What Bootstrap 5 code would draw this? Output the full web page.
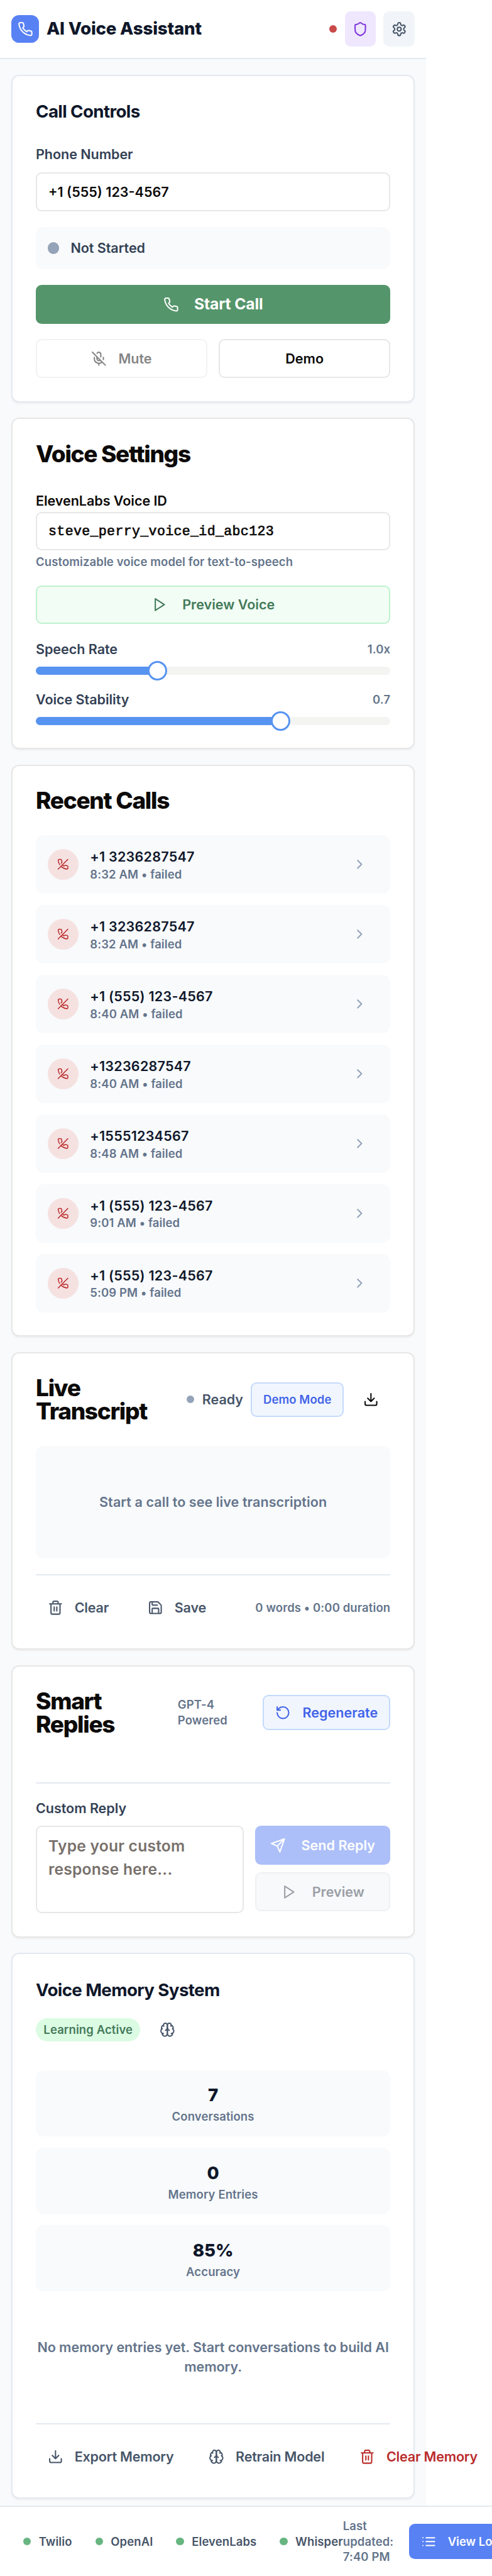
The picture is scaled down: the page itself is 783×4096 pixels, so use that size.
<!DOCTYPE html>
<html lang="en">
<head>
<meta charset="utf-8">
<meta name="viewport" content="width=device-width, initial-scale=1">
<title>AI Voice Assistant</title>
<link href="https://cdn.jsdelivr.net/npm/bootstrap@5.3.0/dist/css/bootstrap.min.css" rel="stylesheet">
<style>
  html { font-size: 24.6614px; overflow: hidden; }
  body { font-family: Inter, "Liberation Sans", sans-serif; font-weight: 600; font-size: .875rem; line-height: 1.25rem; letter-spacing: -.003em; color: #0c0a09; background: #fff; overflow: hidden; height: 4096px; }
  .shell { width: 27.5rem; }
  .icon { width: 1rem; height: 1rem; fill: none; stroke: currentColor; stroke-width: 2; stroke-linecap: round; stroke-linejoin: round; flex: none; }
  .t-slate { color: #64748b; } .t-ink { color: #0f172a; } .t-mid { color: #334155; } .t-steel { color: #475569; }
  .xs, .btn.xs { font-size: .75rem; line-height: 1rem; letter-spacing: .006em; }
  .soft { background: #f8fafc; border-radius: .5rem; }
  .dot { width: .5rem; height: .5rem; border-radius: 50%; background: #94a3b8; flex: none; }
  .dot-ok { background: #67b580; } .dot-bad { background: #ca4a49; }

  .topbar { height: 3.8125rem; padding: 0 .75rem; border-bottom: 2px solid #e4e9f1; background: #fff; }
  .logo { width: 1.75rem; height: 1.75rem; border-radius: .5rem; background: #5881f4; color: #fff; }
  .tool { width: 2rem; height: 2.25rem; border-radius: .375rem; padding: 0; border: 0; }
  .tool-shield { background: #efe7fe; color: #7c35de; } .tool-gear { background: #f1f5f9; color: #475569; }
  .brand { font-size: 1.125rem; font-weight: 800; letter-spacing: -.008em; line-height: 1.75rem; }

  main { background: #f8fafc; padding: 1rem .75rem .4375rem; }
  .panel { background: #fff; border: 2px solid #e8e7e6; border-radius: .5rem; padding: calc(1.5625rem - 2px); box-shadow: 0 .0625rem .125rem rgba(0,0,0,.05); }
  .panel-blue { border-color: #e4e9f1; }
  .h-sm { font-size: 1.125rem; line-height: 1.6875rem; font-weight: 700; letter-spacing: -.023em; color: #0f172a; margin: 0; }
  .h-lg { font-size: 1.5rem; line-height: 1.5rem; font-weight: 800; letter-spacing: -.035em; margin: 0; }
  .field { height: 2.5rem; border: 2px solid #e8e7e6; border-radius: .375rem; padding: 0 calc(.8125rem - 2px); font-size: .875rem; font-weight: 600; color: #0c0a09; width: 100%; background: #fff; outline: 0; display: block; }
  .mono { font-family: "Liberation Mono", monospace; font-weight: 400; letter-spacing: .0165em; -webkit-text-stroke: .7px #0c0a09; }
  textarea.field { height: 5.625rem; font-size: 1rem; line-height: 1.5rem; padding-top: calc(.5625rem - 2px); resize: none; letter-spacing: .008em; }
  textarea.field::placeholder { color: #78716c; opacity: 1; }

  .btn { display: inline-flex; align-items: center; justify-content: center; gap: 1rem; height: 2.5rem; padding: 0; font-size: .875rem; line-height: 1.25rem; font-weight: 600; border: 2px solid transparent; border-radius: .375rem; white-space: nowrap; color: #0c0a09; }
  .btn-go { background: #55956b; color: #fff; font-size: 1rem; font-weight: 700; letter-spacing: -.006em; }
  .btn-line { border-color: #e8e7e6; background: #fff; gap: .75rem; }
  .half { opacity: .5; }
  .btn-mint { background: #f2fdf5; border-color: #bff2cf; color: #447a5a; }
  .btn-sky { height: 2.25rem; background: #f1f6fe; border-color: #c4dafc; color: #4263e8; }
  .btn-ghost { height: 2.25rem; gap: .75rem; padding: 0 calc(.75rem - 2px); color: #475569; letter-spacing: -.01em; }
  .btn-send { background: #acbff9; color: #fff; width: 8.725rem; }
  .btn-wait { background: #f8f9fb; border-color: #eff0f1; color: #9b9fa6; width: 8.725rem; }
  .btn-blue { background: #5881f4; color: #fff; height: 2.25rem; gap: .75rem; padding: 0 calc(.75rem - 2px); font-size: .75rem; flex: none; }

  .slide { height: .5rem; border-radius: .5rem; background: #f4f4f3; }
  .slide-fill { height: 100%; border-radius: .5rem 0 0 .5rem; background: #5793f1; position: relative; }
  .slide-fill::after { content: ""; position: absolute; right: -.625rem; top: -.375rem; width: 1.25rem; height: 1.25rem; border-radius: 50%; background: #fff; border: .125rem solid #5793f1; }

  .call { padding: .75rem; height: 3.75rem; }
  .call .t-ink { letter-spacing: .01em; }
  .call-ic { width: 2rem; height: 2rem; border-radius: 50%; background: #f6e1e1; color: #ba2c2b; }
  .call-ic .icon { width: .75rem; height: .75rem; }
  .go { width: 2.5rem; color: #94a3b8; }
  .empty { height: 7.25rem; letter-spacing: .003em; }
  .rule { border-top: 2px solid #e4e9f1; }
  .pill { background: #dcfbe3; color: #447a5a; border-radius: 1rem; padding: .25rem .5rem; }
  .stat { height: 4.25rem; padding: .75rem; text-align: center; }
  .stat b { display: block; font-size: 1.125rem; line-height: 1.75rem; font-weight: 800; color: #0f172a; }
  footer { width: 34rem; height: 4.5625rem; border-top: 2px solid #e4e9f1; background: #fff; padding-left: 1.5rem; }
</style>
</head>
<body>
<svg class="d-none">
  <symbol id="phone" viewBox="0 0 24 24"><path d="M22 16.92v3a2 2 0 0 1-2.18 2 19.79 19.79 0 0 1-8.63-3.07 19.5 19.5 0 0 1-6-6 19.79 19.79 0 0 1-3.07-8.67A2 2 0 0 1 4.11 2h3a2 2 0 0 1 2 1.72 12.84 12.84 0 0 0 .7 2.81 2 2 0 0 1-.45 2.11L8.09 9.91a16 16 0 0 0 6 6l1.27-1.27a2 2 0 0 1 2.11-.45 12.84 12.84 0 0 0 2.81.7A2 2 0 0 1 22 16.92z"/></symbol>
  <symbol id="phone-off" viewBox="0 0 24 24"><path d="M10.68 13.31a16 16 0 0 0 3.41 2.6l1.27-1.27a2 2 0 0 1 2.11-.45 12.84 12.84 0 0 0 2.81.7 2 2 0 0 1 1.72 2v3a2 2 0 0 1-2.18 2 19.79 19.79 0 0 1-8.63-3.07 19.42 19.42 0 0 1-3.33-2.67m-2.67-3.34a19.79 19.79 0 0 1-3.07-8.63A2 2 0 0 1 4.11 2h3a2 2 0 0 1 2 1.72 12.84 12.84 0 0 0 .7 2.81 2 2 0 0 1-.45 2.11L8.09 9.91"/><path d="M22 2 2 22"/></symbol>
  <symbol id="shield" viewBox="0 0 24 24"><path d="M20 13c0 5-3.5 7.5-7.66 8.95a1 1 0 0 1-.67-.01C7.5 20.5 4 18 4 13V6a1 1 0 0 1 1-1c2 0 4.5-1.2 6.24-2.72a1.17 1.17 0 0 1 1.52 0C14.51 3.81 17 5 19 5a1 1 0 0 1 1 1z"/></symbol>
  <symbol id="gear" viewBox="0 0 24 24"><path d="M12.22 2h-.44a2 2 0 0 0-2 2v.18a2 2 0 0 1-1 1.73l-.43.25a2 2 0 0 1-2 0l-.15-.08a2 2 0 0 0-2.73.73l-.22.38a2 2 0 0 0 .73 2.73l.15.1a2 2 0 0 1 1 1.72v.51a2 2 0 0 1-1 1.74l-.15.09a2 2 0 0 0-.73 2.73l.22.38a2 2 0 0 0 2.73.73l.15-.08a2 2 0 0 1 2 0l.43.25a2 2 0 0 1 1 1.73V20a2 2 0 0 0 2 2h.44a2 2 0 0 0 2-2v-.18a2 2 0 0 1 1-1.73l.43-.25a2 2 0 0 1 2 0l.15.08a2 2 0 0 0 2.73-.73l.22-.39a2 2 0 0 0-.73-2.73l-.15-.08a2 2 0 0 1-1-1.74v-.5a2 2 0 0 1 1-1.74l.15-.09a2 2 0 0 0 .73-2.73l-.22-.38a2 2 0 0 0-2.73-.73l-.15.08a2 2 0 0 1-2 0l-.43-.25a2 2 0 0 1-1-1.73V4a2 2 0 0 0-2-2z"/><circle cx="12" cy="12" r="3"/></symbol>
  <symbol id="mic-off" viewBox="0 0 24 24"><path d="m2 2 20 20M18.89 13.23A7.12 7.12 0 0 0 19 12v-2M5 10v2a7 7 0 0 0 12 5M15 9.34V5a3 3 0 0 0-5.68-1.33M9 9v3a3 3 0 0 0 5.12 2.12M12 19v3"/></symbol>
  <symbol id="play" viewBox="0 0 24 24"><path d="m6 3 14 9-14 9z"/></symbol>
  <symbol id="chevron" viewBox="0 0 24 24"><path d="m9 18 6-6-6-6"/></symbol>
  <symbol id="download" viewBox="0 0 24 24"><path d="M21 15v4a2 2 0 0 1-2 2H5a2 2 0 0 1-2-2v-4M7 10l5 5 5-5M12 15V3"/></symbol>
  <symbol id="trash" viewBox="0 0 24 24"><path d="M3 6h18M19 6v14c0 1-1 2-2 2H7c-1 0-2-1-2-2V6M8 6V4c0-1 1-2 2-2h4c1 0 2 1 2 2v2M10 11v6M14 11v6"/></symbol>
  <symbol id="save" viewBox="0 0 24 24"><path d="M15.2 3a2 2 0 0 1 1.4.6l3.8 3.8a2 2 0 0 1 .6 1.4V19a2 2 0 0 1-2 2H5a2 2 0 0 1-2-2V5a2 2 0 0 1 2-2zM17 21v-7a1 1 0 0 0-1-1H8a1 1 0 0 0-1 1v7M7 3v4a1 1 0 0 0 1 1h7"/></symbol>
  <symbol id="rotate" viewBox="0 0 24 24"><path d="M3 12a9 9 0 1 0 9-9 9.75 9.75 0 0 0-6.74 2.74L3 8M3 3v5h5"/></symbol>
  <symbol id="send" viewBox="0 0 24 24"><path d="m22 2-7 20-4-9-9-4ZM22 2 11 13"/></symbol>
  <symbol id="brain" viewBox="0 0 24 24"><path d="M12 5a3 3 0 1 0-5.997.125 4 4 0 0 0-2.526 5.77 4 4 0 0 0 .556 6.588A4 4 0 1 0 12 18Z"/><path d="M12 5a3 3 0 1 1 5.997.125 4 4 0 0 1 2.526 5.77 4 4 0 0 1-.556 6.588A4 4 0 1 1 12 18Z"/><path d="M15 13a4.5 4.5 0 0 1-3-4 4.5 4.5 0 0 1-3 4M17.599 6.5a3 3 0 0 0 .399-1.375M6.003 5.125A3 3 0 0 0 6.401 6.5M3.477 10.896a4 4 0 0 1 .585-.396M19.938 10.5a4 4 0 0 1 .585.396M6 18a4 4 0 0 1-1.967-.516M19.967 17.484A4 4 0 0 1 18 18"/></symbol>
  <symbol id="list" viewBox="0 0 24 24"><path d="M8 6h13M8 12h13M8 18h13M3 6h.01M3 12h.01M3 18h.01"/></symbol>
</svg>

<div class="shell">
  <header class="topbar d-flex align-items-center gap-2">
    <span class="logo d-flex align-items-center justify-content-center"><svg class="icon"><use href="#phone"/></svg></span>
    <h1 class="brand t-ink mb-0 me-auto">AI Voice Assistant</h1>
    <span class="dot dot-bad"></span>
    <button class="tool tool-shield d-flex align-items-center justify-content-center"><svg class="icon"><use href="#shield"/></svg></button>
    <button class="tool tool-gear d-flex align-items-center justify-content-center"><svg class="icon"><use href="#gear"/></svg></button>
  </header>

  <main class="d-flex flex-column gap-3">
    <section class="panel panel-blue">
      <h2 class="h-sm" style="margin-bottom:1.25rem">Call Controls</h2>
      <label class="d-block t-mid" style="margin-bottom:.5625rem">Phone Number</label>
      <input class="field mb-3" value="+1 (555) 123-4567">
      <div class="soft d-flex align-items-center mb-3" style="height:2.75rem;padding:0 .75rem;gap:.75rem">
        <span class="dot" style="width:.75rem;height:.75rem"></span><span class="t-mid">Not Started</span>
      </div>
      <button class="btn btn-go w-100 mb-3"><svg class="icon"><use href="#phone"/></svg>Start Call</button>
      <div class="d-flex" style="gap:.75rem">
        <button class="btn btn-line half flex-fill w-50"><svg class="icon"><use href="#mic-off"/></svg>Mute</button>
        <button class="btn btn-line flex-fill w-50">Demo</button>
      </div>
    </section>

    <section class="panel">
      <h2 class="h-lg" style="margin-bottom:1.6875rem">Voice Settings</h2>
      <label class="d-block" style="margin-bottom:.0625rem">ElevenLabs Voice ID</label>
      <input class="field mono" value="steve_perry_voice_id_abc123">
      <div class="xs t-slate" style="margin:.25rem 0 1rem">Customizable voice model for text-to-speech</div>
      <button class="btn btn-mint w-100" style="margin-bottom:1rem"><svg class="icon"><use href="#play"/></svg>Preview Voice</button>
      <div class="d-flex justify-content-between align-items-center mb-2"><span class="t-mid">Speech Rate</span><span class="xs t-slate">1.0x</span></div>
      <div class="slide mb-3"><div class="slide-fill" style="width:34.25%"></div></div>
      <div class="d-flex justify-content-between align-items-center mb-2"><span class="t-mid">Voice Stability</span><span class="xs t-slate">0.7</span></div>
      <div class="slide"><div class="slide-fill" style="width:69%"></div></div>
    </section>

    <section class="panel">
      <h2 class="h-lg mb-4">Recent Calls</h2>
      <div class="d-flex flex-column" style="gap:.75rem">
        <div class="soft call d-flex align-items-center"><span class="call-ic d-flex align-items-center justify-content-center me-2"><svg class="icon"><use href="#phone-off"/></svg></span><div class="ms-1 me-auto"><div class="t-ink">+1 3236287547</div><div class="xs t-slate">8:32 AM • failed</div></div><span class="go d-flex justify-content-center"><svg class="icon"><use href="#chevron"/></svg></span></div>
        <div class="soft call d-flex align-items-center"><span class="call-ic d-flex align-items-center justify-content-center me-2"><svg class="icon"><use href="#phone-off"/></svg></span><div class="ms-1 me-auto"><div class="t-ink">+1 3236287547</div><div class="xs t-slate">8:32 AM • failed</div></div><span class="go d-flex justify-content-center"><svg class="icon"><use href="#chevron"/></svg></span></div>
        <div class="soft call d-flex align-items-center"><span class="call-ic d-flex align-items-center justify-content-center me-2"><svg class="icon"><use href="#phone-off"/></svg></span><div class="ms-1 me-auto"><div class="t-ink">+1 (555) 123-4567</div><div class="xs t-slate">8:40 AM • failed</div></div><span class="go d-flex justify-content-center"><svg class="icon"><use href="#chevron"/></svg></span></div>
        <div class="soft call d-flex align-items-center"><span class="call-ic d-flex align-items-center justify-content-center me-2"><svg class="icon"><use href="#phone-off"/></svg></span><div class="ms-1 me-auto"><div class="t-ink">+13236287547</div><div class="xs t-slate">8:40 AM • failed</div></div><span class="go d-flex justify-content-center"><svg class="icon"><use href="#chevron"/></svg></span></div>
        <div class="soft call d-flex align-items-center"><span class="call-ic d-flex align-items-center justify-content-center me-2"><svg class="icon"><use href="#phone-off"/></svg></span><div class="ms-1 me-auto"><div class="t-ink">+15551234567</div><div class="xs t-slate">8:48 AM • failed</div></div><span class="go d-flex justify-content-center"><svg class="icon"><use href="#chevron"/></svg></span></div>
        <div class="soft call d-flex align-items-center"><span class="call-ic d-flex align-items-center justify-content-center me-2"><svg class="icon"><use href="#phone-off"/></svg></span><div class="ms-1 me-auto"><div class="t-ink">+1 (555) 123-4567</div><div class="xs t-slate">9:01 AM • failed</div></div><span class="go d-flex justify-content-center"><svg class="icon"><use href="#chevron"/></svg></span></div>
        <div class="soft call d-flex align-items-center"><span class="call-ic d-flex align-items-center justify-content-center me-2"><svg class="icon"><use href="#phone-off"/></svg></span><div class="ms-1 me-auto"><div class="t-ink">+1 (555) 123-4567</div><div class="xs t-slate">5:09 PM • failed</div></div><span class="go d-flex justify-content-center"><svg class="icon"><use href="#chevron"/></svg></span></div>
      </div>
    </section>

    <section class="panel">
      <div class="d-flex align-items-center gap-2 mb-4">
        <h2 class="h-lg me-auto">Live<br>Transcript</h2>
        <span class="dot"></span><span class="t-steel">Ready</span>
        <button class="btn btn-sky xs" style="width:6rem">Demo Mode</button>
        <button class="btn" style="width:2.5rem;height:2.25rem"><svg class="icon"><use href="#download"/></svg></button>
      </div>
      <div class="soft empty d-flex align-items-center justify-content-center t-slate mb-3">Start a call to see live transcription</div>
      <div class="rule d-flex align-items-center gap-3" style="padding-top:calc(1.0625rem - 2px)">
        <button class="btn btn-ghost"><svg class="icon"><use href="#trash"/></svg>Clear</button>
        <button class="btn btn-ghost"><svg class="icon"><use href="#save"/></svg>Save</button>
        <span class="xs t-slate ms-auto">0 words • 0:00 duration</span>
      </div>
    </section>

    <section class="panel">
      <div class="d-flex align-items-center justify-content-between" style="margin-bottom:3rem">
        <h2 class="h-lg">Smart<br>Replies</h2>
        <span class="xs t-slate ms-auto" style="width:5.5rem">GPT-4<br>Powered</span>
        <button class="btn btn-sky" style="gap:.75rem;width:8.22rem"><svg class="icon"><use href="#rotate"/></svg>Regenerate</button>
      </div>
      <div class="rule" style="padding-top:calc(1.0625rem - 2px)">
        <label class="d-block t-mid mb-2">Custom Reply</label>
        <div class="d-flex" style="gap:.75rem">
          <textarea class="field flex-fill" style="width:0" placeholder="Type your custom response here..."></textarea>
          <div class="d-flex flex-column gap-2">
            <button class="btn btn-send"><svg class="icon"><use href="#send"/></svg>Send Reply</button>
            <button class="btn btn-wait"><svg class="icon"><use href="#play"/></svg>Preview</button>
          </div>
        </div>
      </div>
    </section>

    <section class="panel panel-blue">
      <h2 class="h-sm" style="margin-bottom:.9375rem">Voice Memory System</h2>
      <div class="d-flex align-items-center" style="margin-bottom:1.875rem;gap:1.25rem">
        <span class="pill xs">Learning Active</span><svg class="icon t-steel"><use href="#brain"/></svg>
      </div>
      <div class="d-flex flex-column" style="gap:.75rem">
        <div class="soft stat"><b>7</b><div class="xs t-slate">Conversations</div></div>
        <div class="soft stat"><b>0</b><div class="xs t-slate">Memory Entries</div></div>
        <div class="soft stat"><b>85%</b><div class="xs t-slate">Accuracy</div></div>
      </div>
      <p class="text-center t-slate my-5">No memory entries yet. Start conversations to build AI<br>memory.</p>
      <div class="rule d-flex" style="gap:.75rem;padding-top:calc(1.0625rem - 2px)">
        <button class="btn btn-ghost"><svg class="icon"><use href="#download"/></svg>Export Memory</button>
        <button class="btn btn-ghost"><svg class="icon"><use href="#brain"/></svg>Retrain Model</button>
        <button class="btn btn-ghost" style="color:#ba2c2b"><svg class="icon"><use href="#trash"/></svg>Clear Memory</button>
      </div>
    </section>
  </main>
</div>

<footer class="d-flex align-items-center xs">
  <div class="d-flex gap-4 t-steel">
    <span class="d-flex align-items-center gap-2"><span class="dot dot-ok"></span>Twilio</span>
    <span class="d-flex align-items-center gap-2"><span class="dot dot-ok"></span>OpenAI</span>
    <span class="d-flex align-items-center gap-2"><span class="dot dot-ok"></span>ElevenLabs</span>
    <span class="d-flex align-items-center gap-2"><span class="dot dot-ok"></span>Whisper</span>
  </div>
  <div class="t-slate me-3">Last<br>updated:<br>7:40&nbsp;PM</div>
  <button class="btn btn-blue"><svg class="icon"><use href="#list"/></svg>View Logs</button>
</footer>
<script src="https://cdn.jsdelivr.net/npm/bootstrap@5.3.0/dist/js/bootstrap.bundle.min.js"></script>
</body>
</html>
